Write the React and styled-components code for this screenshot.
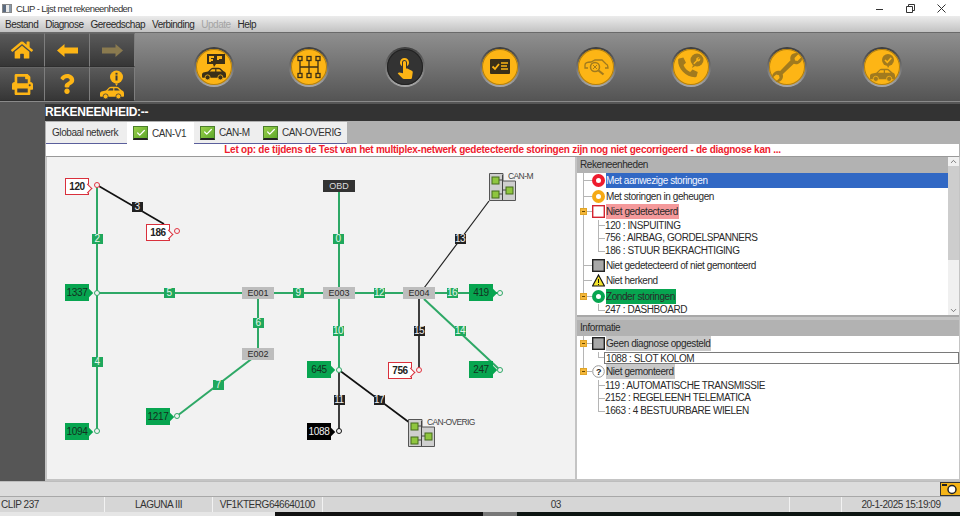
import React from 'react'
import styled, { createGlobalStyle } from 'styled-components'
import { FaHome, FaPrint, FaQuestion } from 'react-icons/fa'
import { MdTouchApp } from 'react-icons/md'
import { ChevronUp, ChevronDown, Check } from 'lucide-react'

const GlobalStyle = createGlobalStyle`
  html, body { margin:0; padding:0; background:#fff; }
  * { box-sizing:border-box; }
  body { font-family:"Liberation Sans", Arial, sans-serif; font-size:10px; letter-spacing:-.42px; color:#222; }
`

const YELLOW = '#fdb515'
const MUTED = '#a17a1e'
const INK = '#3a2f18'

// origin of the diagram inside the window
const OX = 47
const OY = 157

const Car = ({ x = 0, y = 0, w = 24, color = INK, glass = YELLOW }) => (
  <g transform={`translate(${x} ${y}) scale(${w / 24})`}>
    <path fill={color} d="M0 10V7.400C0 6.200 1 5.400 2.400 5.200L6 4.600 9 1.600C9.600 1 10.200.8 11 .8h5.600c.8 0 1.400.3 2 .8l3 2.700c1.400.4 2.400 1.400 2.400 3V10c0 .5-.3.8-.8.8H.8C.3 10.800 0 10.500 0 10z" />
    <path fill={glass} d="M7.600 4.600 10 2.200h3.200v2.400zM14.400 2.200h2.200c.4 0 .7.100 1 .4l2.200 2H14.400z" />
    <circle cx="5.600" cy="10.400" r="2.500" fill={color} stroke={glass} strokeWidth=".8" />
    <circle cx="18.400" cy="10.400" r="2.500" fill={color} stroke={glass} strokeWidth=".8" />
  </g>
)

const ArrowGlyph = ({ flip, color }) => (
  <svg width="21" height="13" viewBox="0 0 21 13" style={flip ? { transform: 'scaleX(-1)' } : undefined}>
    <path fill={color} d="M0 6.500 7.500 0V3.500H21V9.500H7.500V13z" />
  </svg>
)

const CarInfoGlyph = () => (
  <svg width="26" height="29" viewBox="0 0 26 29">
    <circle cx="17.500" cy="7" r="6.500" fill={YELLOW} />
    <rect x="16.500" y="5.500" width="2" height="5" fill="#3a3a3a" />
    <rect x="16.500" y="2.800" width="2" height="1.800" fill="#3a3a3a" />
    <path d="M16 13.500l1.500 2.500 1.500-2.500z" fill={YELLOW} />
    <Car x={1} y={16} w={24} color={YELLOW} glass="#3f3f3f" />
  </svg>
)

const ScanGlyph = () => (
  <svg width="36" height="36" viewBox="0 0 36 36">
    <path d="M11 5h18v10h-9l-2 3-1-3h-6z" fill={INK} />
    <path d="M13 7h5v2h-3v1h2v2h-2v1h-2zM21 7h5v3h-3v1h-2z" fill={YELLOW} />
    <Car x={6} y={18} w={24} />
  </svg>
)

const GearGlyph = () => (
  <svg width="36" height="36" viewBox="0 0 36 36" fill="none" stroke={INK}>
    <path d="M9 10V26M18 10V26M27 10V26M9 18H27" strokeWidth="1.300" />
    {[9, 18, 27].map(cx => [9.500, 26.500].map(cy => (
      <rect key={`${cx}-${cy}`} x={cx - 2} y={cy - 2} width="4" height="4" fill={YELLOW} strokeWidth="1.300" />
    )))}
  </svg>
)

const ChecklistGlyph = () => (
  <svg width="36" height="36" viewBox="0 0 36 36">
    <rect x="8" y="10" width="20" height="15" rx="1" fill={INK} />
    <path d="M10.500 17.500l2.500 2.500 4-5" fill="none" stroke={YELLOW} strokeWidth="1.800" />
    <path d="M19 14h7M19 17h6M19 20h7" stroke={YELLOW} strokeWidth="1.300" />
  </svg>
)

const InspectGlyph = () => (
  <svg width="36" height="36" viewBox="0 0 36 36" fill="none" stroke={MUTED}>
    <path d="M7 16c0-2 3-3 6-3l4-2h7l4 4c2 .6 2 2 2 4h-3" strokeWidth="1.300" />
    <path d="M7 16v3h3" strokeWidth="1.300" />
    <circle cx="17" cy="18" r="4.500" strokeWidth="1.500" />
    <path d="M20.500 21.500l5 4" strokeWidth="2.200" />
    <path d="M15 16l4 4M19 16l-4 4" strokeWidth="1" />
  </svg>
)

const PhoneGlyph = () => (
  <svg width="36" height="36" viewBox="0 0 36 36">
    <g transform="translate(3 8) scale(1.050)">
      <path fill={MUTED} d="M3 1.500 7 .5l2.500 5-2.300 2c1 2.800 3.500 5.500 6.300 6.800l2.200-2.300 5 2.300-1 4c-.3.800-1 1-1.800 1C9.500 19 1.500 11 2 2.800 2 2.200 2.400 1.700 3 1.500z" />
    </g>
    <circle cx="24" cy="11" r="6.500" fill={MUTED} />
    <path d="M26.500 8.500a2.300 2.300 0 0 0-3.200 2.800l-3 3 1 1 3-3a2.300 2.300 0 0 0 2.800-3.200l-1.400 1.400-1.200-.6z" fill={YELLOW} />
    <path d="M20 16l-1 3 3-2z" fill={MUTED} />
  </svg>
)

const WrenchGlyph = () => (
  <svg width="36" height="36" viewBox="0 0 36 36">
    <path fill={MUTED} d="M30 4.500 25.500 9l.5 2.500 2.500.5L33 7.500c.6 3.300-.7 6-3.600 7.200-1.700.700-3.200.600-4.600.100L13.700 25.200c.5 1.500.4 3-.3 4.500-1.200 2.600-3.800 3.800-6.800 3.300l4-4-.6-2.800-2.800-.6-4 3.500c-.5-3 .8-5.500 3.400-6.700 1.500-.7 3-.8 4.500-.3L21.500 11.200c-.4-1.500-.3-3 .4-4.400C23.100 4.300 26.800 3.300 30 4.500z" />
  </svg>
)

const CarCheckGlyph = () => (
  <svg width="36" height="36" viewBox="0 0 36 36">
    <circle cx="24" cy="11" r="6" fill={MUTED} />
    <path d="M21 11l2.300 2.400 4-4.500" fill="none" stroke={YELLOW} strokeWidth="1.600" />
    <path d="M23 16.500l1 2.500 1.500-2.500z" fill={MUTED} />
    <Car x={6} y={19} w={25} color={MUTED} />
  </svg>
)

const StatusGlyph = ({ kind }) => {
  if (kind === 'red') return <svg width="13" height="13"><circle cx="6.500" cy="6.500" r="4.500" fill="#fff" stroke="#ee1c2e" strokeWidth="4" /></svg>
  if (kind === 'orange') return <svg width="13" height="13"><circle cx="6.500" cy="6.500" r="4.500" fill="#fff" stroke="#f5a914" strokeWidth="4" /></svg>
  if (kind === 'green') return <svg width="13" height="13"><circle cx="6.500" cy="6.500" r="4.500" fill="#fff" stroke="#07a550" strokeWidth="4" /></svg>
  if (kind === 'hollow') return <svg width="13" height="13"><rect x=".7" y=".7" width="11.600" height="11.600" fill="#fff" stroke="#d42330" strokeWidth="1.400" /></svg>
  if (kind === 'grey') return <svg width="13" height="13"><rect x=".7" y=".7" width="11.600" height="11.600" fill="#a8a8a8" stroke="#222" strokeWidth="1.400" /></svg>
  if (kind === 'warn') return <svg width="13" height="13"><path d="M6.500 1 12.500 12H.5z" fill="#f3e32c" stroke="#111" strokeWidth="1.200" /><path d="M6.500 5v4" stroke="#111" /><path d="M6.500 10v1" stroke="#111" /></svg>
  return (
    <svg width="13" height="13">
      <circle cx="6.500" cy="6.500" r="5.800" fill="#fff" stroke="#999" />
      <text x="6.500" y="9.800" fontSize="9" fontWeight="700" textAnchor="middle" fill="#222">?</text>
    </svg>
  )
}

const CanGroup = () => (
  <svg width="27" height="28" viewBox="0 0 27 28">
    <path d="M.5.500H14V8H26.500V27.500H.5z" fill="#cfcfcf" stroke="#555" />
    <path d="M13.500 2V27M10 7H13.500M10 21H13.500M13.500 17H17" stroke="#444" />
    {[[3, 4], [3, 18], [17, 14]].map(([x, y]) => (
      <rect key={`${x}${y}`} x={x} y={y} width="7" height="7" fill="#8fc63f" stroke="#456b1c" />
    ))}
  </svg>
)

const Page = styled.div`
  width:960px;
  height:516px;
  display:flex;
  flex-direction:column;
  overflow:hidden;
`
const TitleBar = styled.div`
  height:16px;
  flex:none;
  background:#fff;
  display:flex;
  align-items:center;
  padding:0 14px 0 2px;
  font-size:9.500px;
  letter-spacing:-.58px;
  color:#333;
`
const AppIcon = styled.span`
  width:10px;
  height:9px;
  margin-right:4px;
  background:linear-gradient(90deg,#5a6a80 0 40%,#e8e8e8 40% 70%,#8899aa 70%);
  border:1px solid #888;
`
const WindowControls = styled.div`
  margin-left:auto;
  display:flex;
  gap:22px;
  align-items:center;
`
const MenuBar = styled.div`
  height:16px;
  flex:none;
  background:linear-gradient(#ececec,#c2c2c2);
  display:flex;
  gap:7px;
  align-items:center;
  padding-left:5px;
  letter-spacing:-.5px;
`
const MenuItem = styled.span`
  color:${p => (p.$off ? '#a4a4a4' : '#2a2a2a')};
`
const Toolbar = styled.div`
  height:70px;
  flex:none;
  display:flex;
  background:linear-gradient(#8f8f8f,#545454);
  border-top:1px solid #6a6a6a;
  border-bottom:1px solid #8a8a8a;
`
const QuickGrid = styled.div`
  width:135px;
  flex:none;
  display:grid;
  grid-template-columns:repeat(3,45px);
  grid-template-rows:repeat(2,34px);
`
const QuickButton = styled.button`
  padding:0;
  border:0;
  border-right:1px solid #7e7e7e;
  border-bottom:1px solid #2e2e2e;
  border-top:1px solid #666;
  background:linear-gradient(#5a5a5a,#363636);
  color:${p => p.$off ? '#8a7a4f' : YELLOW};
  display:flex;
  align-items:center;
  justify-content:center;
`
const RoundRow = styled.div`
  display:grid;
  grid-template-columns:repeat(8,95.500px);
  padding-left:31px;
  align-items:center;
  justify-items:center;
`
const RoundWell = styled.div`
  width:40px;
  height:40px;
  border-radius:50%;
  background:linear-gradient(#3d3d3d,#a8a8a8);
  display:flex;
  align-items:center;
  justify-content:center;
`
const RoundFace = styled.div`
  width:36px;
  height:36px;
  border-radius:50%;
  background:${p => (p.$active ? '#333' : YELLOW)};
  color:${YELLOW};
  box-shadow:inset 0 0 0 1px ${p => (p.$active ? '#222' : '#b07f12')};
  display:flex;
  align-items:center;
  justify-content:center;
`
const Body = styled.div`
  flex:1;
  min-height:0;
  display:flex;
  background:#565656;
`
const Main = styled.div`
  margin:2px 0 0 45px;
  flex:1;
  min-width:0;
  display:flex;
  flex-direction:column;
  background:#b0b0b0;
`
const UnitBar = styled.div`
  height:17px;
  flex:none;
  margin-bottom:1px;
  background:#333;
  color:#fff;
  font-size:12px;
  font-weight:700;
  letter-spacing:-.27px;
  line-height:17px;
`
const TabStrip = styled.div`
  height:22px;
  flex:none;
  display:flex;
  padding-left:1px;
`
const Tab = styled.div`
  width:${p => p.$w}px;
  display:flex;
  align-items:center;
  gap:4px;
  padding-left:${p => p.$pad}px;
  background:${p => (p.$active ? '#fff' : '#eeeeee')};
  border-bottom:${p => (p.$active ? '0' : '1px solid #5a5f9c')};
  color:#333;
`
const CheckBox = styled.span`
  width:15px;
  height:14px;
  background:linear-gradient(135deg,#9ad04a,#5ea82a);
  border:1px solid #4a7f2a;
  border-bottom:2px solid #222;
  display:flex;
  align-items:center;
  justify-content:center;
  color:#fff;
`
const Warning = styled.div`
  height:13px;
  flex:none;
  margin-left:1px;
  margin-right:1px;
  background:#fff;
  border-bottom:1px solid #999;
  color:#ee1c2e;
  font-size:10px;
  font-weight:700;
  letter-spacing:-.25px;
  line-height:12px;
  text-align:center;
`
const Panes = styled.div`
  flex:1;
  min-height:0;
  display:flex;
  padding:0 1px 2px 2px;
  background:#c4c4c4;
`
const Canvas = styled.div`
  width:528px;
  flex:none;
  position:relative;
  background:#f2f2f2;
`
const Wires = styled.svg`
  position:absolute;
  inset:0;
`
const Device = styled.div`
  position:absolute;
  z-index:0;
  left:${p => p.$x - OX}px;
  top:${p => p.$y - OY}px;
  width:24px;
  height:17px;
  display:flex;
  align-items:center;
  justify-content:center;
  font-size:10px;
  letter-spacing:-.35px;
  font-weight:${p => (p.$tone === 'lost' ? 700 : 400)};
  background:${p => ({ ok: '#07a550', lost: '#fff', dark: '#000' })[p.$tone]};
  color:${p => ({ ok: '#13301f', lost: '#222', dark: '#eee' })[p.$tone]};
  border:${p => (p.$tone === 'lost' ? '1.500px solid #d9303c' : '0')};
  &::after {
    content:'';
    position:absolute;
    z-index:-1;
    right:-3px;
    top:5.500px;
    width:6px;
    height:6px;
    transform:rotate(45deg);
    background:${p => ({ ok: '#07a550', lost: '#fff', dark: '#000' })[p.$tone]};
    border-top:${p => (p.$tone === 'lost' ? '1.500px solid #d9303c' : '0')};
    border-right:${p => (p.$tone === 'lost' ? '1.500px solid #d9303c' : '0')};
  }
`
const Port = styled.span`
  position:absolute;
  left:${p => p.$x - OX - 3}px;
  top:${p => p.$y - OY - 3}px;
  width:6px;
  height:6px;
  border-radius:50%;
  background:#f2f2f2;
  border:1px solid ${p => ({ ok: '#2ea866', lost: '#e23340', dark: '#111' })[p.$tone]};
`
const Junction = styled.div`
  position:absolute;
  left:${p => p.$x - OX - 16}px;
  top:${p => p.$y - OY - 6}px;
  width:32px;
  height:12px;
  background:${p => (p.$dark ? '#333' : '#bdbdbd')};
  color:${p => (p.$dark ? '#ddd' : '#2a2a2a')};
  font-size:9px;
  letter-spacing:0;
  line-height:12px;
  text-align:center;
`
const LinkTag = styled.div`
  position:absolute;
  left:${p => p.$x - OX - 5.500}px;
  top:${p => p.$y - OY - 5}px;
  width:11px;
  height:10px;
  background:${p => (p.$dark ? '#222' : '#1fa85c')};
  color:${p => (p.$dark ? '#eee' : '#e6f7ec')};
  font-size:10px;
  letter-spacing:-.5px;
  line-height:10px;
  text-align:center;
`
const Group = styled.div`
  position:absolute;
  left:${p => p.$x - OX}px;
  top:${p => p.$y - OY}px;
  display:flex;
  line-height:1;
  align-items:flex-start;
`
const GroupName = styled.span`
  margin:-1px 0 0 -8px;
  font-size:8.500px;
  letter-spacing:-.6px;
  color:#444;
`
const Side = styled.div`
  flex:1;
  min-width:0;
  margin-left:2px;
  display:flex;
  flex-direction:column;
`
const TreeBox = styled.div`
  height:160px;
  flex:none;
  display:flex;
  background:#fff;
  border-bottom:2px solid #a8a8a8;
`
const TreeCol = styled.div`
  flex:1;
  min-width:0;
  overflow:hidden;
`
const PaneHead = styled.div`
  height:16px;
  background:#b2b2b2;
  padding-left:3px;
  line-height:16px;
  color:#2a2a2a;
`
const Scrollbar = styled.div`
  width:11px;
  flex:none;
  display:flex;
  flex-direction:column;
  align-items:center;
  justify-content:space-between;
  background:#f0f0f0;
  color:#555;
`
const ScrollThumb = styled.div`
  width:100%;
  height:94px;
  margin-bottom:auto;
  background:#cdcdcd;
`
const InfoBox = styled.div`
  flex:1;
  margin-top:3px;
  background:#fff;
`
const Row = styled.div`
  height:${p => (p.$sub ? 12.670 : 15.500)}px;
  display:flex;
  align-items:center;
`
const Branch = styled.span`
  width:15px;
  height:100%;
  flex:none;
  position:relative;
  background:
    linear-gradient(#b5b5b5,#b5b5b5) 6px 50%/9px 1px no-repeat,
    linear-gradient(#b5b5b5,#b5b5b5) 6px 0/1px ${p => (p.$end ? '50%' : '100%')} no-repeat;
`
const Toggle = styled.span`
  position:absolute;
  left:3px;
  top:50%;
  margin-top:-3.500px;
  width:7px;
  height:7px;
  background:#f4b73a;
  border:1px solid #e0a428;
  &::after { content:''; display:block; margin:2px 0 0 1px; width:3px; height:1px; background:#6a4a00; }
`
const Glyph = styled.span`
  width:13px;
  height:13px;
  flex:none;
  margin-right:1px;
  display:flex;
`
const Label = styled.span`
  height:15px;
  line-height:16px;
  padding-right:1px;
  flex:${p => (p.$tone === 'selected' ? 1 : 'none')};
  background:${p => ({ selected: '#3168c4', red: '#f4999b', green: '#07a550', grey: '#c9c9c9' })[p.$tone] || 'transparent'};
  color:${p => (p.$tone === 'selected' ? '#f2f6ff' : '#2a2a2a')};
`
const SubIndent = styled.span`
  width:21px;
  height:100%;
  flex:none;
  background:${p => (p.$trunk ? 'linear-gradient(#b5b5b5,#b5b5b5) 6px 0/1px 100% no-repeat' : 'none')};
`
const SubStub = styled.span`
  width:7px;
  height:100%;
  flex:none;
  background:
    linear-gradient(#b5b5b5,#b5b5b5) 0 50%/7px 1px no-repeat,
    linear-gradient(#b5b5b5,#b5b5b5) 0 0/1px ${p => (p.$last ? '50%' : '100%')} no-repeat;
`
const SubLabel = styled.span`
  flex:${p => (p.$focus ? 1 : 'none')};
  height:12.500px;
  line-height:11.500px;
  border:${p => (p.$focus ? '1px solid #7a7a7a' : '0')};
  padding-left:${p => (p.$focus ? 1 : 0)}px;
  margin-left:${p => (p.$focus ? -1 : 0)}px;
  color:#2a2a2a;
`
const Band = styled.div`
  height:16px;
  flex:none;
  display:flex;
  justify-content:flex-end;
  background:#dcdcdc;
  border-top:1px solid #bdbdbd;
  border-bottom:1px solid #a8a8a8;
`
const Status = styled.div`
  height:15px;
  flex:none;
  display:grid;
  grid-template-columns:105px 108px 109.600px 467.400px 52px 118px;
  background:#d6d6d6;
`
const StatusCell = styled.div`
  border-right:${p => (p.$last ? '0' : '1px solid #f2f2f2')};
  text-align:${p => (p.$left ? 'left' : 'center')};
  padding-left:${p => (p.$left ? 1 : 0)}px;
  line-height:15px;
  color:#333;
  letter-spacing:-.45px;
`
const Desktop = styled.div`
  height:4px;
  flex:none;
  display:grid;
  grid-template-columns:275px 208px 34px 1fr;
`
const DesktopPart = styled.span`
  background:${p => p.$c};
`

const wires = [
  ['M97 185V431', 'ok'], ['M97 293H419', 'ok'], ['M339 185V370', 'ok'], ['M258 293V354', 'ok'],
  ['M258 354 177 416', 'ok'], ['M419 293H500', 'ok'], ['M424 299 500 370', 'ok'],
  ['M97 185 164 224', 'dark'], ['M424 288 489 201', 'thin'], ['M419 299V370', 'dark'],
  ['M339 370V431', 'dark'], ['M339 370 410 423', 'dark'],
]
const wireStroke = { ok: ['#2ea866', 2], dark: ['#111', 1.6], thin: ['#222', 1.2] }

const devices = [
  ['120', 65, 178, 'lost', 97, 185], ['186', 146, 224, 'lost', 177, 231],
  ['1337', 65, 284, 'ok', 97, 293], ['1094', 65, 423, 'ok', 97, 431],
  ['1217', 146, 408, 'ok', 177, 416], ['645', 307, 361, 'ok', 339, 370],
  ['1088', 307, 423, 'dark', 339, 431], ['756', 388, 362, 'lost', 419, 370],
  ['419', 469, 284, 'ok', 500, 293], ['247', 469, 361, 'ok', 500, 370],
]
const links = [
  ['2', 97, 239], ['4', 97, 362], ['3', 137, 207, 1], ['5', 169, 293], ['6', 258, 323],
  ['7', 218, 385], ['9', 298, 293], ['0', 338, 239], ['10', 338, 331], ['11', 339, 400, 1],
  ['12', 379, 293], ['17', 379, 400, 1], ['15', 419, 331, 1], ['13', 460, 239, 1],
  ['14', 460, 331], ['16', 452, 293],
]
const units = [
  { main: 'Met aanwezige storingen', glyph: 'red', tone: 'selected' },
  { main: 'Met storingen in geheugen', glyph: 'orange' },
  { main: 'Niet gedetecteerd', glyph: 'hollow', tone: 'red', open: true, subs: ['120 : INSPUITING', '756 : AIRBAG, GORDELSPANNERS', '186 : STUUR BEKRACHTIGING'] },
  { main: 'Niet gedetecteerd of niet gemonteerd', glyph: 'grey' },
  { main: 'Niet herkend', glyph: 'warn' },
  { main: 'Zonder storingen', glyph: 'green', tone: 'green', open: true, subs: ['247 : DASHBOARD'] },
]
const info = [
  { main: 'Geen diagnose opgesteld', glyph: 'grey', tone: 'grey', open: true, subs: ['1088 : SLOT KOLOM'], focus: 0 },
  { main: 'Niet gemonteerd', glyph: 'help', tone: 'grey', open: true, subs: ['119 : AUTOMATISCHE TRANSMISSIE', '2152 : REGELEENH TELEMATICA', '1663 : 4 BESTUURBARE WIELEN'] },
]

function TreeList({ items }) {
  return items.map((item, i) => (
    <React.Fragment key={item.main}>
      <Row>
        <Branch $end={i === items.length - 1}>{item.open && <Toggle />}</Branch>
        <Glyph><StatusGlyph kind={item.glyph} /></Glyph>
        <Label $tone={item.tone}>{item.main}</Label>
      </Row>
      {item.subs && item.subs.map((sub, j) => (
        <Row $sub key={sub}>
          <SubIndent $trunk={i < items.length - 1} />
          <SubStub $last={j === item.subs.length - 1} />
          <SubLabel $focus={item.focus === j}>{sub}</SubLabel>
        </Row>
      ))}
    </React.Fragment>
  ))
}

export default function App() {
  const round = [<ScanGlyph />, <GearGlyph />, <MdTouchApp size={24} />, <ChecklistGlyph />, <InspectGlyph />, <PhoneGlyph />, <WrenchGlyph />, <CarCheckGlyph />]
  return (
    <Page>
      <GlobalStyle />
      <TitleBar>
        <AppIcon />
        CLIP - Lijst met rekeneenheden
        <WindowControls>
          <svg width="9" height="9"><path d="M1 5.500H8" stroke="#333" /></svg>
          <svg width="9" height="9" fill="none" stroke="#333"><path d="M.5 2.500h6v6h-6zM2.500 2.500v-2h6v6h-2" /></svg>
          <svg width="9" height="9" stroke="#333"><path d="M.5.500l8 8M8.500.500l-8 8" /></svg>
        </WindowControls>
      </TitleBar>
      <MenuBar>
        <MenuItem>Bestand</MenuItem>
        <MenuItem>Diagnose</MenuItem>
        <MenuItem>Gereedschap</MenuItem>
        <MenuItem>Verbinding</MenuItem>
        <MenuItem $off>Update</MenuItem>
        <MenuItem>Help</MenuItem>
      </MenuBar>
      <Toolbar>
        <QuickGrid>
          <QuickButton><FaHome size={22} /></QuickButton>
          <QuickButton><ArrowGlyph color={YELLOW} /></QuickButton>
          <QuickButton $off><ArrowGlyph flip color="#8a7a4f" /></QuickButton>
          <QuickButton><FaPrint size={21} /></QuickButton>
          <QuickButton><FaQuestion size={20} /></QuickButton>
          <QuickButton><CarInfoGlyph /></QuickButton>
        </QuickGrid>
        <RoundRow>
          {round.map((icon, i) => (
            <RoundWell key={i}><RoundFace $active={i === 2}>{icon}</RoundFace></RoundWell>
          ))}
        </RoundRow>
      </Toolbar>
      <Body>
        <Main>
          <UnitBar>REKENEENHEID:--</UnitBar>
          <TabStrip>
            <Tab $w={81} $pad={6}>Globaal netwerk</Tab>
            <Tab $active $w={67} $pad={6}><CheckBox><Check size={10} strokeWidth={3} /></CheckBox>CAN-V1</Tab>
            <Tab $w={63} $pad={6}><CheckBox><Check size={10} strokeWidth={3} /></CheckBox>CAN-M</Tab>
            <Tab $w={90} $pad={6}><CheckBox><Check size={10} strokeWidth={3} /></CheckBox>CAN-OVERIG</Tab>
          </TabStrip>
          <Warning>Let op: de tijdens de Test van het multiplex-netwerk gedetecteerde storingen zijn nog niet gecorrigeerd - de diagnose kan ...</Warning>
          <Panes>
            <Canvas>
              <Wires width="528" height="322" viewBox={`${OX} ${OY} 528 322`}>
                {wires.map(([d, kind]) => (
                  <path key={d} d={d} fill="none" stroke={wireStroke[kind][0]} strokeWidth={wireStroke[kind][1]} />
                ))}
              </Wires>
              <Junction $dark $x={339} $y={185.500}>OBD</Junction>
              <Junction $x={258} $y={293}>E001</Junction>
              <Junction $x={258} $y={354}>E002</Junction>
              <Junction $x={339} $y={293}>E003</Junction>
              <Junction $x={419} $y={293}>E004</Junction>
              {links.map(([text, x, y, dark]) => (
                <LinkTag key={text} $x={x} $y={y} $dark={dark}>{text}</LinkTag>
              ))}
              {devices.map(([id, x, y, tone, px, py]) => (
                <React.Fragment key={id}>
                  <Device $x={x} $y={y} $tone={tone}>{id}</Device>
                  <Port $x={px} $y={py} $tone={tone} />
                </React.Fragment>
              ))}
              <Group $x={489} $y={173}><CanGroup /><GroupName>CAN-M</GroupName></Group>
              <Group $x={408} $y={419}><CanGroup /><GroupName>CAN-OVERIG</GroupName></Group>
            </Canvas>
            <Side>
              <TreeBox>
                <TreeCol>
                  <PaneHead>Rekeneenheden</PaneHead>
                  <TreeList items={units} />
                </TreeCol>
                <Scrollbar>
                  <ChevronUp size={9} />
                  <ScrollThumb />
                  <ChevronDown size={9} />
                </Scrollbar>
              </TreeBox>
              <InfoBox>
                <PaneHead>Informatie</PaneHead>
                <TreeList items={info} />
              </InfoBox>
            </Side>
          </Panes>
        </Main>
      </Body>
      <Band>
        <svg width="20" height="14" viewBox="0 0 20 14">
          <rect x=".5" y=".5" width="20" height="13" fill="#f5b417" stroke="#333" />
          <rect x="2" y="2" width="5" height="2" fill="#222" />
          <circle cx="12" cy="7.500" r="4" fill="#fff" stroke="#222" strokeWidth="1.500" />
        </svg>
      </Band>
      <Status>
        <StatusCell $left>CLIP 237</StatusCell>
        <StatusCell>LAGUNA III</StatusCell>
        <StatusCell>VF1KTERG646640100</StatusCell>
        <StatusCell>03</StatusCell>
        <StatusCell />
        <StatusCell $last>20-1-2025 15:19:09</StatusCell>
      </Status>
      <Desktop>
        <DesktopPart $c="#e6e6e6" />
        <DesktopPart $c="#111" />
        <DesktopPart $c="#777" />
        <DesktopPart $c="#0d1512" />
      </Desktop>
    </Page>
  )
}
